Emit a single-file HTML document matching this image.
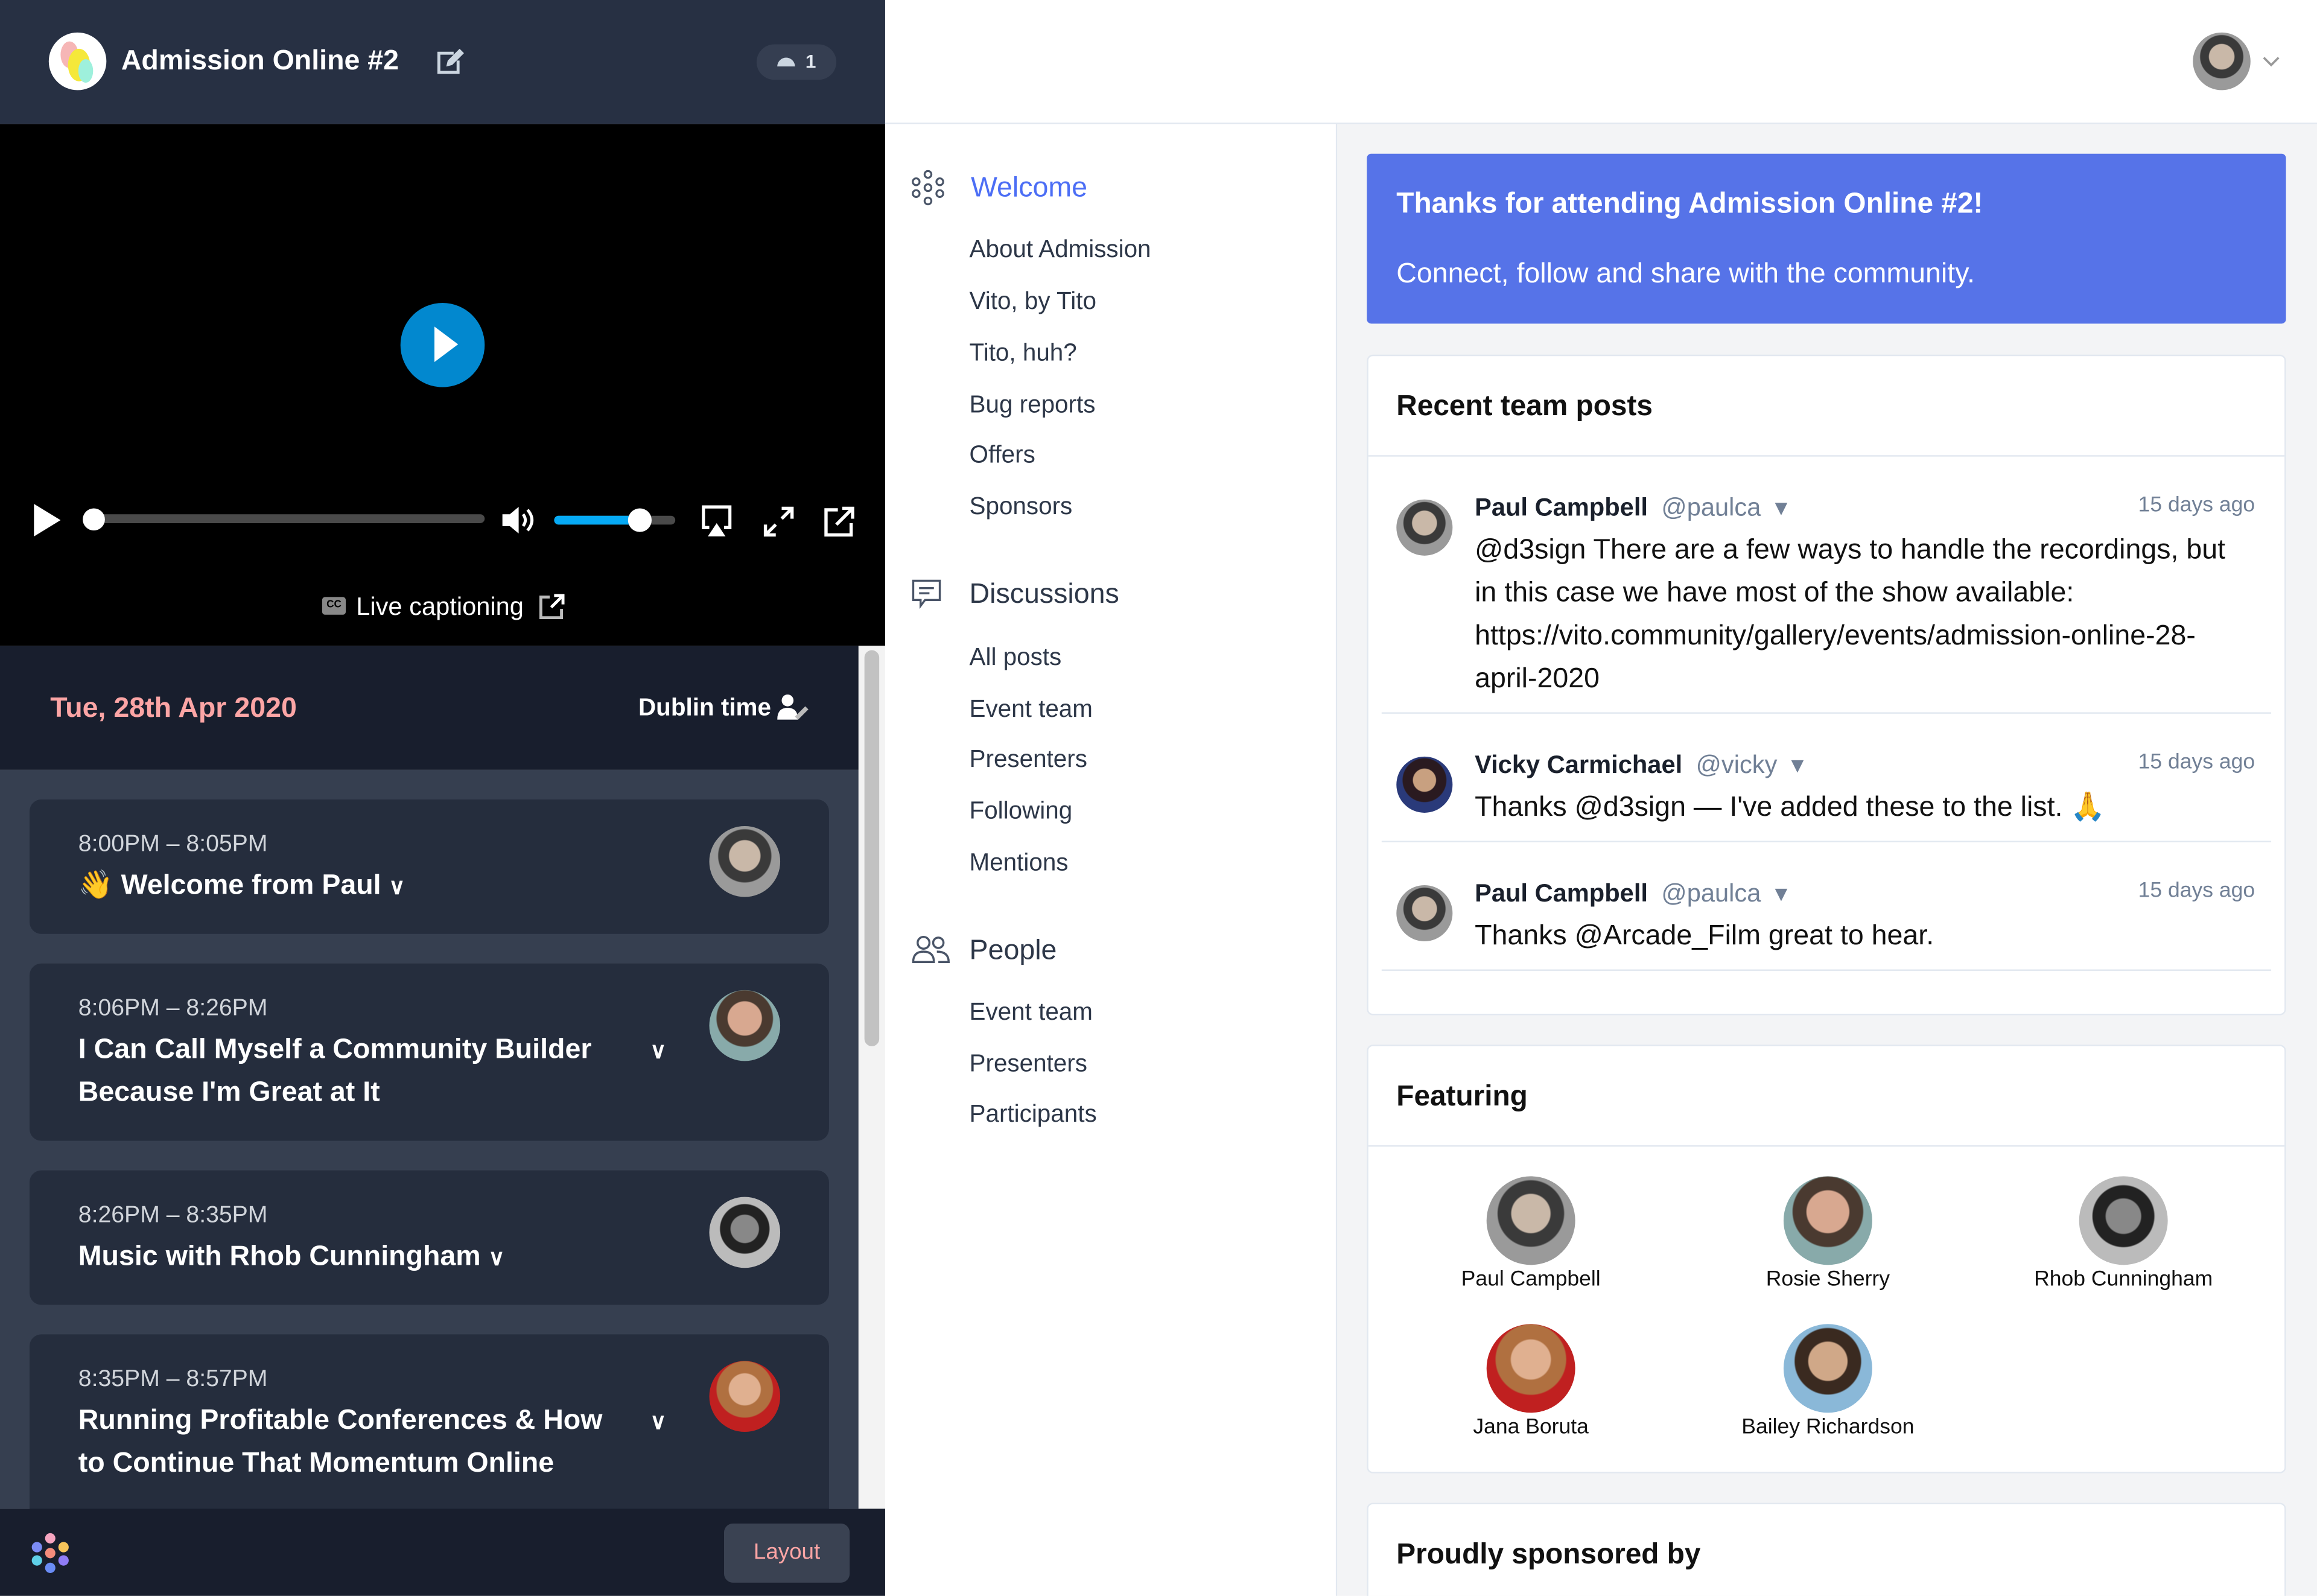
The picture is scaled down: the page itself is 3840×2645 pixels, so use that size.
<!DOCTYPE html>
<html><head><meta charset="utf-8"><style>
*{margin:0;padding:0;box-sizing:border-box}
html,body{width:3840px;height:2644px;overflow:hidden;background:#fff}
#s{position:absolute;left:0;top:0;width:1568px;height:1080px;transform:scale(2.44898);transform-origin:0 0;font-family:"Liberation Sans",sans-serif;overflow:hidden}
.a{position:absolute}
.av{position:absolute;border-radius:50%;background:radial-gradient(circle at 50% 42%,#c9b8a8 0 28%,#3a3a3a 30% 48%,#9a9a9a 50%);overflow:hidden}
.avg{background:radial-gradient(circle at 50% 45%,#888 0 26%,#222 28% 46%,#bbb 48%)}
.nav{position:absolute;left:656px;font-size:16.5px;color:#2d3748}
.card{position:absolute;left:20px;width:541px;background:#252d3d;border-radius:8px}
.tm{position:absolute;left:33px;font-size:16px;color:#d1d5db}
.tt{position:absolute;left:33px;font-size:19px;font-weight:bold;color:#fff;line-height:29px}
.pn{font-weight:bold;color:#1a202c;font-size:17px}
.ph{color:#718096;font-size:17px}
.ago{position:absolute;right:20px;color:#718096;font-size:14.5px}
.body{font-size:19px;color:#111;line-height:29px}
.fn{position:absolute;font-size:14.5px;color:#111;text-align:center;width:200px}
</style></head><body><div id="s">
<div class="a" style="left:0;top:0;width:599px;height:84px;background:#273043"></div>
<div class="a" style="left:33px;top:22px;width:39px;height:39px;border-radius:50%;background:#fff;overflow:hidden">
<div class="a" style="left:8px;top:6px;width:12px;height:18px;border-radius:50%;background:#f6b6b6"></div>
<div class="a" style="left:13px;top:11px;width:15px;height:22px;border-radius:50%;background:#f5e83a"></div>
<div class="a" style="left:20px;top:18px;width:10px;height:16px;border-radius:50%;background:#9ef0dc"></div></div>
<div class="a" style="left:82px;top:31px;font-size:19px;font-weight:bold;color:#fff">Admission Online #2</div>
<svg class="a" style="left:295px;top:33px" width="20" height="18" viewBox="0 0 20 18"><path d="M12 3H2v13h13V8" fill="none" stroke="#cbd5e0" stroke-width="2"/><path d="M7 12l1-4 8-8 3 3-8 8z" fill="#cbd5e0"/></svg>
<div class="a" style="left:512px;top:30px;width:54px;height:24px;border-radius:12px;background:#353e51;color:#e2e8f0;font-size:13px;font-weight:bold;line-height:24px;padding-left:33px">1</div>
<svg class="a" style="left:525px;top:37px" width="14" height="8"><path d="M1 8a6 6 0 0 1 12 0z" fill="#cbd5e0"/></svg>
<div class="a" style="left:0;top:84px;width:599px;height:353px;background:#000"></div>
<div class="a" style="left:271px;top:205px;width:57px;height:57px;border-radius:50%;background:#0288cf"></div>
<svg class="a" style="left:292px;top:220px" width="20" height="26"><path d="M2 1l16 12L2 25z" fill="#fff"/></svg>
<svg class="a" style="left:22px;top:341px" width="20" height="22"><path d="M1 0l18 11L1 22z" fill="#fff"/></svg>
<div class="a" style="left:57px;top:348px;width:271px;height:6px;border-radius:3px;background:#4a4a4a"></div>
<div class="a" style="left:56px;top:344px;width:15px;height:15px;border-radius:50%;background:#fff"></div>
<svg class="a" style="left:339px;top:342px" width="24" height="20"><path d="M1 6h5l6-5v18l-6-5H1z" fill="#fff"/><path d="M15 6q3 4 0 8M18 3q6 7 0 14" fill="none" stroke="#fff" stroke-width="2"/></svg>
<div class="a" style="left:375px;top:349px;width:82px;height:6px;border-radius:3px;background:#4a4a4a"></div>
<div class="a" style="left:375px;top:349px;width:58px;height:6px;border-radius:3px;background:#06aaf5"></div>
<div class="a" style="left:425px;top:344px;width:16px;height:16px;border-radius:50%;background:#fff"></div>
<svg class="a" style="left:475px;top:342px" width="20" height="22"><path d="M5 15H1V1h18v14h-4" fill="none" stroke="#fff" stroke-width="2.2"/><path d="M10 12l6 9H4z" fill="#fff"/></svg>
<svg class="a" style="left:516px;top:342px" width="22" height="22"><path d="M13 2h7v7M20 2l-7 7M9 20H2v-7M2 20l7-7" fill="none" stroke="#fff" stroke-width="2.2"/></svg>
<svg class="a" style="left:557px;top:342px" width="22" height="22"><path d="M10 3H2v17h17v-8" fill="none" stroke="#fff" stroke-width="2.2"/><path d="M13 2h7v7M20 2L9 13" fill="none" stroke="#fff" stroke-width="2.2"/></svg>
<div class="a" style="left:218px;top:404px;width:16px;height:12px;background:#888;border-radius:2px;font-size:7px;font-weight:bold;color:#000;text-align:center;line-height:12px">CC</div>
<div class="a" style="left:241px;top:401px;font-size:17px;color:#fff">Live captioning</div>
<svg class="a" style="left:365px;top:402px" width="17" height="17"><path d="M7 2H1v14h14v-6" fill="none" stroke="#bbb" stroke-width="2"/><path d="M10 1h6v6M16 1L8 9" fill="none" stroke="#fff" stroke-width="2"/></svg>
<div class="a" style="left:0;top:437px;width:581px;height:84px;background:#181e2d"></div>
<div class="a" style="left:34px;top:469px;font-size:19px;font-weight:bold;color:#fca5a5">Tue, 28th Apr 2020</div>
<div class="a" style="left:432px;top:470px;font-size:16.5px;font-weight:bold;color:#fff">Dublin time</div>
<svg class="a" style="left:526px;top:469px" width="22" height="20"><circle cx="7" cy="5" r="4" fill="#fff"/><path d="M0 18q0-8 7-8t7 8z" fill="#fff"/><path d="M13 17l7-7" stroke="#bbb" stroke-width="3"/></svg>
<div class="a" style="left:0;top:521px;width:581px;height:500px;background:#363f50"></div>
<div class="a" style="left:581px;top:437px;width:18px;height:584px;background:#f3f3f3"></div>
<div class="a" style="left:585px;top:440px;width:10px;height:268px;border-radius:5px;background:#c2c2c2"></div>
<div class="card" style="top:541px;height:91px"><div class="tm" style="top:22px">8:00PM – 8:05PM</div><div class="tt" style="top:44px">👋 Welcome from Paul <span style="font-size:15px">∨</span></div><div class="av" style="left:460px;top:18px;width:48px;height:48px"></div></div>
<div class="card" style="top:652px;height:120px"><div class="tm" style="top:22px">8:06PM – 8:26PM</div><div class="tt" style="top:44px">I Can Call Myself a Community Builder<br>Because I'm Great at It</div><div class="a" style="left:420px;top:50px;color:#fff;font-size:15px;font-weight:bold">∨</div><div class="av" style="left:460px;top:18px;width:48px;height:48px;background:radial-gradient(circle at 50% 40%,#d8a890 0 30%,#4a3a30 32% 50%,#8aa 52%)"></div></div>
<div class="card" style="top:792px;height:91px"><div class="tm" style="top:22px">8:26PM – 8:35PM</div><div class="tt" style="top:44px">Music with Rhob Cunningham <span style="font-size:15px">∨</span></div><div class="av avg" style="left:460px;top:18px;width:48px;height:48px"></div></div>
<div class="card" style="top:903px;height:130px"><div class="tm" style="top:22px">8:35PM – 8:57PM</div><div class="tt" style="top:44px">Running Profitable Conferences &amp; How<br>to Continue That Momentum Online</div><div class="a" style="left:420px;top:50px;color:#fff;font-size:15px;font-weight:bold">∨</div><div class="av" style="left:460px;top:18px;width:48px;height:48px;background:radial-gradient(circle at 50% 40%,#e0b090 0 28%,#b07040 30% 50%,#c02020 52%)"></div></div>
<div class="a" style="left:0;top:1021px;width:599px;height:59px;background:#181e2d"></div>
<svg class="a" style="left:20px;top:1037px" width="28" height="28"><circle cx="14" cy="4" r="3.5" fill="#f6a5c0"/><circle cx="5" cy="10" r="3.5" fill="#7c8cf5"/><circle cx="23" cy="10" r="3.5" fill="#f6c45a"/><circle cx="5" cy="19" r="3.5" fill="#5fd0e8"/><circle cx="23" cy="19" r="3.5" fill="#8f7cf5"/><circle cx="14" cy="24" r="3.5" fill="#6a8cf5"/><circle cx="14" cy="14" r="3.5" fill="#f58c7c"/></svg>
<div class="a" style="left:490px;top:1031px;width:85px;height:40px;border-radius:6px;background:#3a4252;color:#fca5a5;font-size:15px;text-align:center;line-height:40px">Layout</div>
<div class="a" style="left:599px;top:83px;width:969px;height:1px;background:#e2e8f0"></div>
<div class="av" style="left:1484px;top:22px;width:39px;height:39px"></div>
<svg class="a" style="left:1531px;top:38px" width="12" height="8"><path d="M1 1l5 5 5-5" fill="none" stroke="#999" stroke-width="1.5"/></svg>
<div class="a" style="left:904px;top:84px;width:1px;height:996px;background:#e2e8f0"></div>
<svg class="a" style="left:616px;top:115px" width="24" height="24" fill="none" stroke="#4a5568" stroke-width="1.3"><circle cx="12" cy="3" r="2.3"/><circle cx="4" cy="8" r="2.3"/><circle cx="20" cy="8" r="2.3"/><circle cx="4" cy="16" r="2.3"/><circle cx="20" cy="16" r="2.3"/><circle cx="12" cy="21" r="2.3"/><circle cx="12" cy="12" r="2.3"/></svg>
<div class="a" style="left:657px;top:117px;font-size:19px;color:#4c6ef5">Welcome</div>
<div class="nav" style="top:160px">About Admission</div>
<div class="nav" style="top:195px">Vito, by Tito</div>
<div class="nav" style="top:230px">Tito, huh?</div>
<div class="nav" style="top:265px">Bug reports</div>
<div class="nav" style="top:299px">Offers</div>
<div class="nav" style="top:334px">Sponsors</div>
<svg class="a" style="left:617px;top:392px" width="22" height="22" fill="none" stroke="#4a5568" stroke-width="1.4"><path d="M1 1h18v13H9l-3 4v-4H1z"/><path d="M5 6h10M5 9.5h7"/></svg>
<div class="a" style="left:656px;top:392px;font-size:19px;color:#2d3748">Discussions</div>
<div class="nav" style="top:436px">All posts</div>
<div class="nav" style="top:471px">Event team</div>
<div class="nav" style="top:505px">Presenters</div>
<div class="nav" style="top:540px">Following</div>
<div class="nav" style="top:575px">Mentions</div>
<svg class="a" style="left:617px;top:633px" width="26" height="20" fill="none" stroke="#4a5568" stroke-width="1.4"><circle cx="8" cy="5" r="4"/><path d="M1 18q0-7 7-7t7 7z"/><circle cx="18" cy="5" r="3.5"/><path d="M17 11q8 0 8 7h-7"/></svg>
<div class="a" style="left:656px;top:633px;font-size:19px;color:#2d3748">People</div>
<div class="nav" style="top:676px">Event team</div>
<div class="nav" style="top:711px">Presenters</div>
<div class="nav" style="top:745px">Participants</div>
<div class="a" style="left:905px;top:84px;width:663px;height:996px;background:#f3f4f6"></div>
<div class="a" style="left:925px;top:104px;width:622px;height:115px;background:#5673e8;border-radius:3px"></div>
<div class="a" style="left:945px;top:127px;font-size:19.5px;font-weight:bold;color:#fff">Thanks for attending Admission Online #2!</div>
<div class="a" style="left:945px;top:175px;font-size:19px;color:#fff">Connect, follow and share with the community.</div>
<div class="a" style="left:925px;top:240px;width:622px;height:447px;background:#fff;border:1px solid #e2e8f0;border-radius:4px">
<div class="a" style="left:19px;top:23px;font-size:19.5px;font-weight:bold;color:#111">Recent team posts</div>
<div class="a" style="left:0;top:67px;width:620px;height:1px;background:#e2e8f0"></div>
<div class="av" style="left:19px;top:97px;width:38px;height:38px"></div>
<div class="a" style="left:72px;top:93px"><span class="pn">Paul Campbell</span> <span class="ph">&nbsp;@paulca &nbsp;▾</span></div>
<div class="ago" style="top:93px">15 days ago</div>
<div class="a body" style="left:72px;top:117px;width:522px">@d3sign There are a few ways to handle the recordings, but in this case we have most of the show available: https://vito.community/gallery/events/admission-online-28-april-2020</div>
<div class="a" style="left:9px;top:241px;width:602px;height:1px;background:#e2e8f0"></div>
<div class="av" style="left:19px;top:271px;width:38px;height:38px;background:radial-gradient(circle at 50% 42%,#c8a080 0 26%,#2a1a20 28% 50%,#2a3a7a 52%)"></div>
<div class="a" style="left:72px;top:267px"><span class="pn">Vicky Carmichael</span> <span class="ph">&nbsp;@vicky &nbsp;▾</span></div>
<div class="ago" style="top:267px">15 days ago</div>
<div class="a body" style="left:72px;top:291px">Thanks @d3sign — I've added these to the list. 🙏</div>
<div class="a" style="left:9px;top:328px;width:602px;height:1px;background:#e2e8f0"></div>
<div class="av" style="left:19px;top:358px;width:38px;height:38px"></div>
<div class="a" style="left:72px;top:354px"><span class="pn">Paul Campbell</span> <span class="ph">&nbsp;@paulca &nbsp;▾</span></div>
<div class="ago" style="top:354px">15 days ago</div>
<div class="a body" style="left:72px;top:378px">Thanks @Arcade_Film great to hear.</div>
<div class="a" style="left:9px;top:415px;width:602px;height:1px;background:#e2e8f0"></div>
</div>
<div class="a" style="left:925px;top:707px;width:622px;height:290px;background:#fff;border:1px solid #e2e8f0;border-radius:4px">
<div class="a" style="left:19px;top:23px;font-size:19.5px;font-weight:bold;color:#111">Featuring</div>
<div class="a" style="left:0;top:67px;width:620px;height:1px;background:#e2e8f0"></div>
<div class="av" style="left:80px;top:88px;width:60px;height:60px"></div><div class="fn" style="left:10px;top:150px">Paul Campbell</div>
<div class="av" style="left:281px;top:88px;width:60px;height:60px;background:radial-gradient(circle at 50% 40%,#d8a890 0 30%,#4a3a30 32% 50%,#8aa 52%)"></div><div class="fn" style="left:211px;top:150px">Rosie Sherry</div>
<div class="av avg" style="left:481px;top:88px;width:60px;height:60px"></div><div class="fn" style="left:411px;top:150px">Rhob Cunningham</div>
<div class="av" style="left:80px;top:188px;width:60px;height:60px;background:radial-gradient(circle at 50% 40%,#e0b090 0 28%,#b07040 30% 50%,#c02020 52%)"></div><div class="fn" style="left:10px;top:250px">Jana Boruta</div>
<div class="av" style="left:281px;top:188px;width:60px;height:60px;background:radial-gradient(circle at 50% 42%,#d0a888 0 28%,#3a2a20 30% 48%,#8ab8d8 50%)"></div><div class="fn" style="left:211px;top:250px">Bailey Richardson</div>
</div>
<div class="a" style="left:925px;top:1017px;width:622px;height:80px;background:#fff;border:1px solid #e2e8f0;border-radius:4px">
<div class="a" style="left:19px;top:23px;font-size:19.5px;font-weight:bold;color:#111">Proudly sponsored by</div></div>
</div></body></html>
